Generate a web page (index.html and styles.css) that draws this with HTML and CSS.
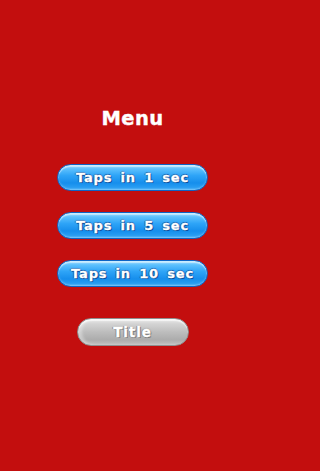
FILE: index.html
```html
<!DOCTYPE html>
<html>
<head>
<meta charset="utf-8">
<link rel="stylesheet" href="styles.css">
</head>
<body>
<main class="screen">
  <h1 class="title">Menu</h1>
  <div class="buttons">
    <div class="btn btn-blue">Taps in 1 sec</div>
    <div class="btn btn-blue">Taps in 5 sec</div>
    <div class="btn btn-blue">Taps in 10 sec</div>
  </div>
  <div class="btn btn-gray">Title</div>
</main>
</body>
</html>
```
FILE: styles.css
```css
html, body {
  margin: 0;
  padding: 0;
  background: #c30e0e;
}
.screen {
  width: 265px;
  height: 471px;
  display: flex;
  flex-direction: column;
  align-items: center;
  box-sizing: border-box;
  padding-top: 107px;
  font-family: "DejaVu Sans", sans-serif;
  font-weight: bold;
}
.title {
  margin: 0;
  font-size: 19.5px;
  line-height: 24px;
  color: #fff;
  letter-spacing: 0.4px;
  -webkit-text-stroke: 0.4px #fff;
}
.buttons {
  margin-top: 33px;
  display: flex;
  flex-direction: column;
  gap: 21px;
}
.btn {
  height: 27px;
  border-radius: 13.5px;
  display: flex;
  align-items: center;
  justify-content: center;
  color: #fff;
  font-size: 13px;
  letter-spacing: 0.8px;
  word-spacing: 3px;
  box-sizing: border-box;
  -webkit-text-stroke: 0.3px #fff;
}
.btn-blue {
  width: 151px;
  border: 1px solid #0d64c4;
  background: linear-gradient(to bottom, #9adbff 0%, #5cc0fd 16%, #2ea4f7 42%, #168eec 72%, #2a9ff3 92%, #4fb3f7 100%);
  box-shadow: inset 0 2px 1px rgba(255,255,255,0.5), inset 0 -1px 2px rgba(255,255,255,0.3);
  text-shadow: 0 0 1.5px #063f85, 1px 1px 0 #0a4f9e, -1px 0 0 rgba(8,70,150,0.6), 0 -1px 0 rgba(8,70,150,0.6);
}
.btn-gray {
  margin-top: 31px;
  height: 28px;
  border-radius: 14px;
  width: 112px;
  border: 1px solid #8f8f8f;
  background: linear-gradient(to bottom, #ececec 0%, #d4d4d4 18%, #bdbdbd 50%, #acacac 80%, #c0c0c0 100%);
  box-shadow: inset 0 2px 1px rgba(255,255,255,0.6), inset 4px 0 3px rgba(255,255,255,0.35);
  text-shadow: 0 0 1.5px #6a6a6a, 1px 1px 0 #7a7a7a, -1px 0 0 rgba(110,110,110,0.6);
  font-size: 13.5px;
  letter-spacing: 0.9px;
}
```
